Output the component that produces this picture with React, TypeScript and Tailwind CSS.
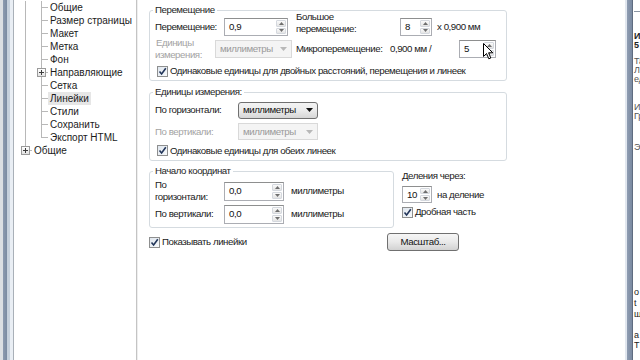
import React from "react";

const Arrow = ({ up, color = "#6e6e6e" }: { up?: boolean; color?: string }) => (
  <svg width="5" height="3" viewBox="0 0 5 3">
    <path d={up ? "M0 3 L2.5 0 L5 3 Z" : "M0 0 L5 0 L2.5 3 Z"} fill={color} />
  </svg>
);

const Spin = ({ value, className, children }: { value: string; className: string; children?: any }) => (
  <div className={`relative flex border border-[#abadb3] border-t-[#8e8f8f] bg-white ${className}`}>
    <span className="flex flex-1 items-center pl-[4px] text-[#111]">{value}</span>
    <div className="flex w-[12px] flex-col gap-px p-px">
      <div className="flex flex-1 items-center justify-center rounded-[1px] border border-[#d4d8de] bg-gradient-to-b from-[#fafafa] to-[#e4e4e4]">
        <Arrow up />
      </div>
      <div className="flex flex-1 items-center justify-center rounded-[1px] border border-[#d4d8de] bg-gradient-to-b from-[#fafafa] to-[#e4e4e4]">
        <Arrow />
      </div>
    </div>
    {children}
  </div>
);

const Combo = ({ text, disabled, className }: { text: string; disabled?: boolean; className: string }) =>
  disabled ? (
    <div className={`flex items-center border border-[#d9d9d9] bg-[#f4f4f4] text-[#9a9a9a] ${className}`}>
      <span className="flex-1 pl-[4px]">{text}</span>
      <span className="flex w-[16px] justify-center">
        <svg width="7" height="4" viewBox="0 0 7 4">
          <path d="M0 0 L7 0 L3.5 4 Z" fill="#b8b8b8" />
        </svg>
      </span>
    </div>
  ) : (
    <div
      className={`flex items-center rounded-[3px] border border-[#707070] bg-gradient-to-b from-[#f3f3f3] via-[#ebebeb] to-[#d6d6d6] text-[#111] ${className}`}
    >
      <span className="flex-1 pl-[4px]">{text}</span>
      <span className="flex w-[16px] justify-center">
        <svg width="7" height="4" viewBox="0 0 7 4">
          <path d="M0 0 L7 0 L3.5 4 Z" fill="#111" />
        </svg>
      </span>
    </div>
  );

const Check = ({ label }: { label: string }) => (
  <div className="flex items-center gap-[2px]">
    <div className="flex h-[11px] w-[11px] items-center justify-center border border-[#8e8f8f] bg-gradient-to-br from-[#dfe6ee] to-[#f7f9fb]">
      <svg width="9" height="9" viewBox="0 0 9 9">
        <path d="M1.5 4.5 L3.6 7 L7.8 1.2" fill="none" stroke="#22355a" strokeWidth="1.6" />
      </svg>
    </div>
    <span className="text-[#1a1a1a]">{label}</span>
  </div>
);

const Group = ({ title, className, children }: { title: string; className: string; children?: any }) => (
  <fieldset className={`rounded-[3px] border border-[#d5dbe0] pl-[3px] ${className}`}>
    <legend className="px-[2px] text-[#1e1e1e]">{title}</legend>
    <div className="pl-[2px]">{children}</div>
  </fieldset>
);

const PlusBox = () => (
  <div className="flex h-[9px] w-[9px] items-center justify-center border border-[#9a9a9a] bg-gradient-to-b from-white to-[#e2e2e2]">
    <svg width="5" height="5" viewBox="0 0 5 5">
      <path d="M0 2.5 H5 M2.5 0 V5" stroke="#3c3c3c" strokeWidth="1" />
    </svg>
  </div>
);

const treeItems = [
  "Общие",
  "Размер страницы",
  "Макет",
  "Метка",
  "Фон",
  "Направляющие",
  "Сетка",
  "Линейки",
  "Стили",
  "Сохранить",
  "Экспорт HTML",
];

const Tree = () => (
  <div className="h-full w-[122px] bg-white pl-[11px] pt-[1px] text-[10px] tracking-[0px] text-[#1b1b1b]">
    <div className="border-l border-[#b8b8b8] pl-[15px]">
      {treeItems.map((t, i) =>
        t === "Направляющие" ? (
          <div key={t} className="flex h-[13px] items-center">
            <div className="-ml-[4px] flex h-full w-[9px] flex-col items-center">
              <div className="h-[2px] w-px bg-[#b8b8b8]" />
              <PlusBox />
              <div className="w-px flex-1 bg-[#b8b8b8]" />
            </div>
            <div className="h-px w-[2px] bg-[#b8b8b8]" />
            <span className="px-[2px] whitespace-nowrap">{t}</span>
          </div>
        ) : (
          <div key={t} className="flex h-[13px] items-center">
            <div className="flex h-full w-[7px] flex-col">
              <div className="h-[7px] border-b border-l border-[#b8b8b8]" />
              <div className={`flex-1 ${i < treeItems.length - 1 ? "border-l border-[#b8b8b8]" : ""}`} />
            </div>
            <span className={`px-[2px] leading-[13px] whitespace-nowrap ${t === "Линейки" ? "bg-[#e6e6e6]" : ""}`}>{t}</span>
          </div>
        )
      )}
    </div>
    <div className="flex h-[13px] items-center">
      <div className="-ml-[4px] flex h-full w-[9px] flex-col items-center">
        <div className="h-[2px] w-px bg-[#b8b8b8]" />
        <PlusBox />
      </div>
      <div className="h-px w-[2px] bg-[#b8b8b8]" />
      <span className="px-[2px]">Общие</span>
    </div>
  </div>
);

const Cursor = () => (
  <svg className="absolute left-[23px] top-[2px]" width="11" height="17" viewBox="0 0 11 17">
    <path d="M0.5 0.5 L0.5 13.5 L3.5 10.5 L5.8 15.8 L7.8 15 L5.6 9.8 L9.8 9.8 Z" fill="#fff" stroke="#000" strokeWidth="1" />
  </svg>
);

const Content = () => (
  <div className="h-full w-[487px] bg-white pl-[11px] pt-[4px] text-[#1a1a1a]">
    <Group title="Перемещение" className="w-[358px]">
      <div className="flex h-[22px] items-center">
        <span className="w-[69px]">Перемещение:</span>
        <Spin value="0,9" className="h-[18px] w-[64px]" />
        <div className="ml-[8px] -mt-[5px] w-[104px] self-start pt-0">
          <div>Большое</div>
          <div>перемещение:</div>
        </div>
        <Spin value="8" className="h-[18px] w-[32px]" />
        <span className="ml-[5px]">x 0,900 мм</span>
      </div>
      <div className="flex h-[22px] items-center">
        <div className="w-[60px] text-[#a3a3a3]">
          <div className="pl-[1px]">Единицы</div>
          <div>измерения:</div>
        </div>
        <Combo text="миллиметры" disabled className="h-[18px] w-[77px]" />
        <span className="ml-[4px] w-[94px]">Микроперемещение:</span>
        <span className="w-[69px]">0,900 мм /</span>
        <Spin value="5" className="h-[18px] w-[37px]">
          <Cursor />
        </Spin>
      </div>
      <div className="mt-[2px] flex h-[18px] items-center pl-[2px]">
        <Check label="Одинаковые единицы для двойных расстояний, перемещения и линеек" />
      </div>
    </Group>

    <Group title="Единицы измерения:" className="mt-[5px] w-[358px]">
      <div className="flex h-[24px] items-center">
        <span className="w-[83px]">По горизонтали:</span>
        <Combo text="миллиметры" className="h-[17px] w-[80px]" />
      </div>
      <div className="flex h-[19px] items-center">
        <span className="w-[83px] text-[#a3a3a3]">По вертикали:</span>
        <Combo text="миллиметры" disabled className="h-[17px] w-[80px]" />
      </div>
      <div className="flex h-[19px] items-center pl-[2px]">
        <Check label="Одинаковые единицы для обеих линеек" />
      </div>
    </Group>

    <div className="mt-[4px] flex items-start">
      <Group title="Начало координат" className="w-[245px] pb-[4px]">
        <div className="flex h-[28px] items-center">
          <div className="w-[69px]">
            <div>По</div>
            <div>горизонтали:</div>
          </div>
          <Spin value="0,0" className="h-[19px] w-[60px]" />
          <span className="ml-[7px]">миллиметры</span>
        </div>
        <div className="flex h-[18px] items-center">
          <span className="w-[69px]">По вертикали:</span>
          <Spin value="0,0" className="h-[19px] w-[60px]" />
          <span className="ml-[7px]">миллиметры</span>
        </div>
      </Group>
      <div className="ml-[8px] pt-[5px]">
        <div>Деления через:</div>
        <div className="mt-[4px] flex h-[17px] items-center">
          <Spin value="10" className="h-[17px] w-[30px]" />
          <span className="ml-[5px]">на деление</span>
        </div>
        <div className="mt-[3px] flex h-[12px] items-center">
          <Check label="Дробная часть" />
        </div>
      </div>
    </div>

    <div className="mt-[4px] flex h-[20px] items-center">
      <div className="w-[238px]">
        <Check label="Показывать линейки" />
      </div>
      <button className="flex h-[18px] w-[72px] items-center justify-center rounded-[3px] border border-[#707070] bg-gradient-to-b from-[#f6f6f6] via-[#e9e9e9] to-[#d2d2d2] text-[#111]">
        Масштаб...
      </button>
    </div>
  </div>
);

const Strip = () => (
  <div className="h-full w-[7px] overflow-hidden bg-white pl-[1px] text-[9px] leading-[9px] tracking-[0px] whitespace-nowrap text-[#222]">
    <div className="mt-[11px] h-px w-full bg-[#8c96a4]" />
    <div className="mt-[20px] font-bold">Из</div>
    <div className="font-bold">5 </div>
    <div className="mt-[7px] text-[#555]">Та</div>
    <div className="text-[#555]">Ли</div>
    <div className="text-[#555]">ед</div>
    <div className="mt-[19px] text-[#555]">Ин</div>
    <div className="text-[#555]">Гр</div>
    <div className="mt-[22px] text-[#555]">Эт</div>
    <div className="mt-[136px]">о</div>
    <div className="mt-[2px]">t</div>
    <div className="mt-[2px]">ш</div>
    <div className="mt-[12px]">а</div>
    <div className="mt-[1px]">Т</div>
  </div>
);

export default function App() {
  return (
    <div className="flex h-[360px] w-[640px] overflow-hidden bg-white font-['Liberation_Sans',Arial,sans-serif] text-[9.7px] leading-[12px] tracking-[-0.45px]">
      <div className="flex h-full w-[14px]">
        <div className="w-[3px] bg-[#dcdfe3]" />
        <div className="w-[4px] bg-gradient-to-r from-[#8d9bb0] to-[#7b8ba1]" />
        <div className="w-[3px] bg-[#c6d0dc]" />
        <div className="w-[3px] bg-[#e9eef4]" />
        <div className="w-px bg-[#a9b0b8]" />
      </div>
      <Tree />
      <div className="flex h-full w-[2px]">
        <div className="w-px bg-[#c4c4c4]" />
        <div className="w-px bg-[#eeeeee]" />
      </div>
      <Content />
      <div className="flex h-full w-[8px]">
        <div className="w-[2px] bg-[#e1e7ef]" />
        <div className="w-[5px] bg-gradient-to-r from-[#8f9db2] to-[#7a8aa1]" />
        <div className="w-px bg-[#5f6c80]" />
      </div>
      <Strip />
    </div>
  );
}
